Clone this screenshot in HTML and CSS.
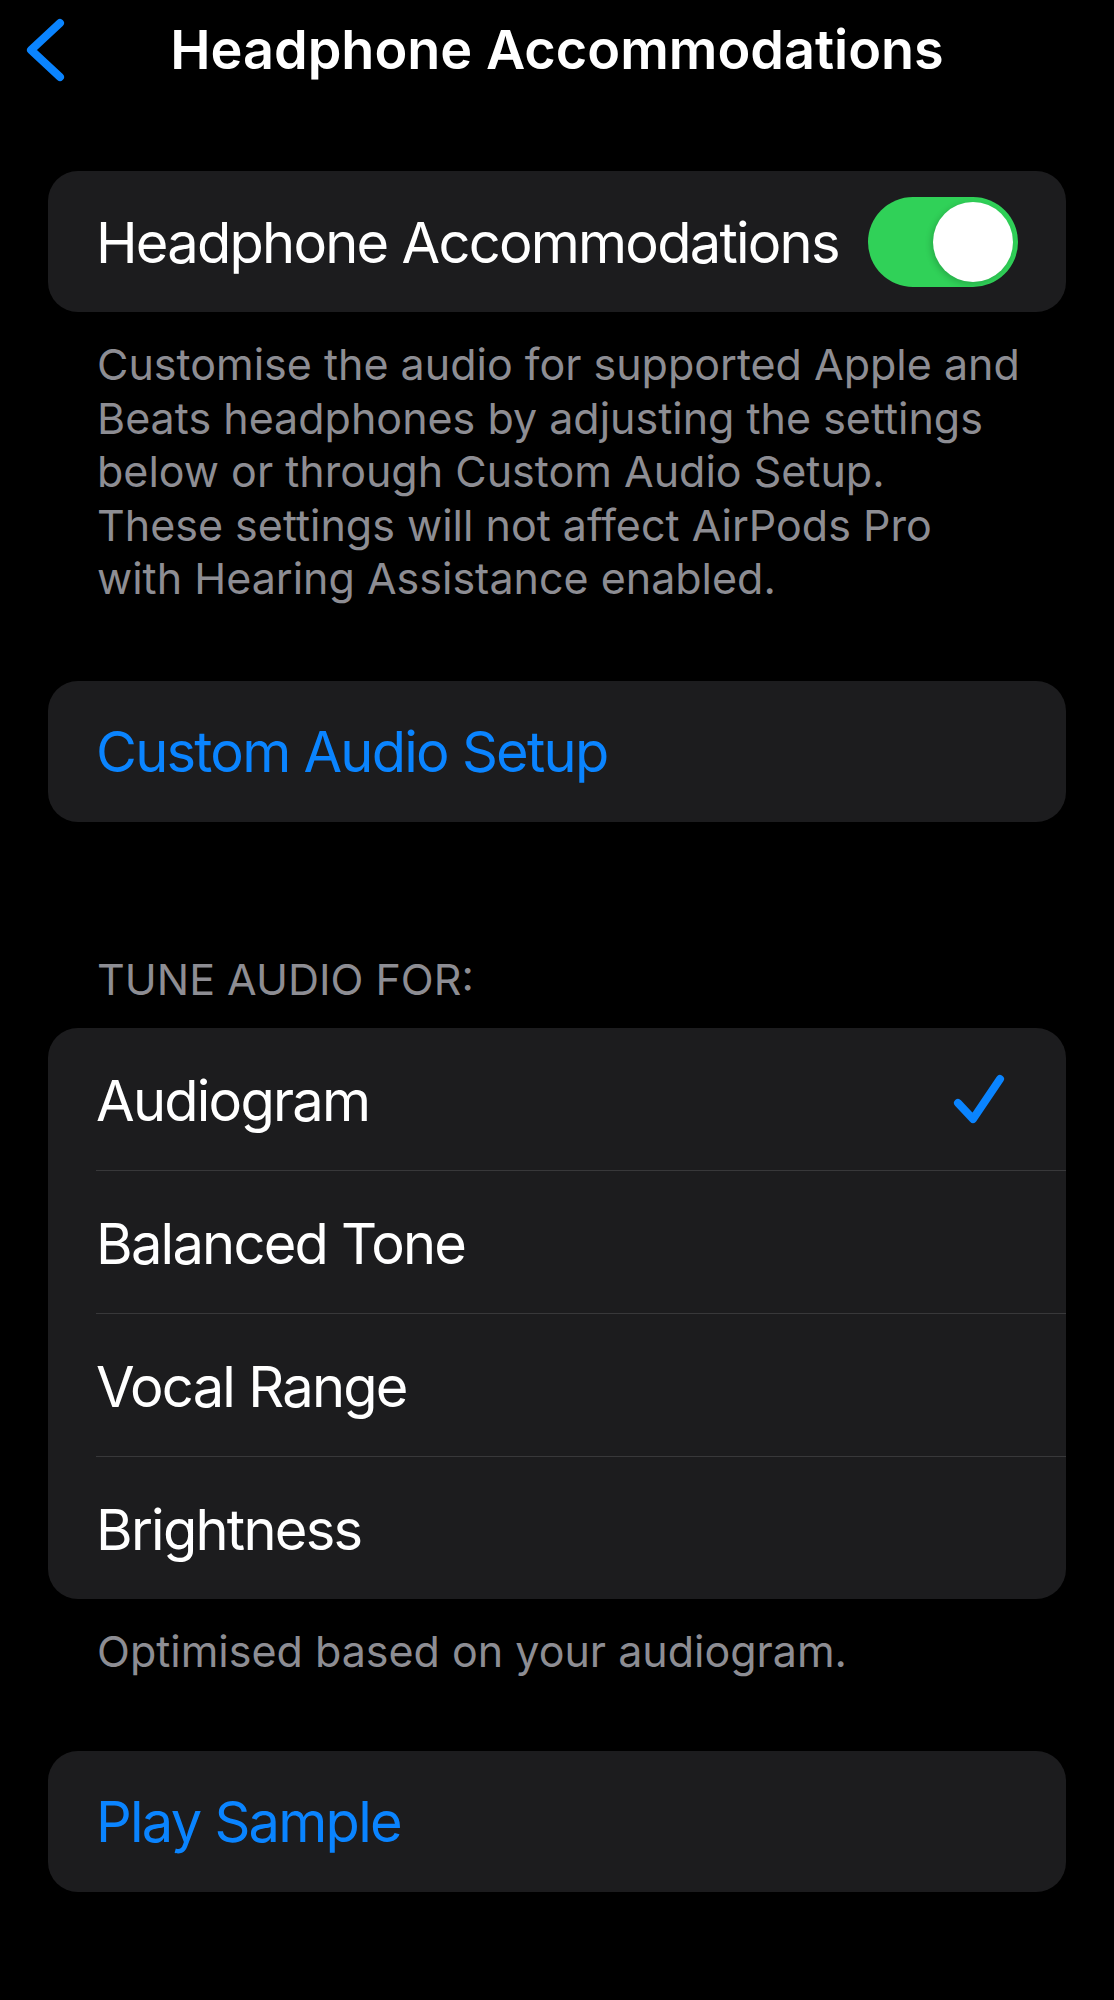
FILE: index.html
```html
<!DOCTYPE html>
<html lang="en">
<head>
<meta charset="utf-8">
<title>Headphone Accommodations</title>
<link rel="stylesheet" href="styles.css">
</head>
<body>
<div class="screen">
  <header class="nav">
    <svg class="back" width="40" height="64" viewBox="0 0 40 64" aria-hidden="true">
      <polyline points="34,5 5,32 34,59" fill="none" stroke="#0a84ff" stroke-width="8" stroke-linecap="round" stroke-linejoin="round"/>
    </svg>
    <h1 class="nav-title">Headphone Accommodations</h1>
  </header>

  <section class="card">
    <div class="row">
      <span class="label">Headphone Accommodations</span>
      <span class="switch"><span class="knob"></span></span>
    </div>
  </section>
  <p class="note note-top">Customise the audio for supported Apple and<br>Beats headphones by adjusting the settings<br>below or through Custom Audio Setup.<br>These settings will not affect AirPods Pro<br>with Hearing Assistance enabled.</p>

  <section class="card card-gap">
    <div class="row"><span class="label link">Custom Audio Setup</span></div>
  </section>

  <h2 class="section-header">TUNE AUDIO FOR:</h2>
  <section class="card list">
    <div class="row">
      <span class="label">Audiogram</span>
      <svg class="check" width="60" height="52" viewBox="0 0 60 52" aria-hidden="true">
        <polyline points="8,30 23,46 50,6" fill="none" stroke="#0a84ff" stroke-width="8" stroke-linecap="round" stroke-linejoin="round"/>
      </svg>
    </div>
    <div class="row"><span class="label">Balanced Tone</span></div>
    <div class="row"><span class="label">Vocal Range</span></div>
    <div class="row"><span class="label">Brightness</span></div>
  </section>
  <p class="note note-single">Optimised based on your audiogram.</p>

  <section class="card card-last">
    <div class="row"><span class="label link">Play Sample</span></div>
  </section>
</div>
</body>
</html>
```
FILE: styles.css
```css
html, body {
  margin: 0;
  padding: 0;
  background: #000;
}

.screen {
  width: 1114px;
  min-height: 2000px;
  background: #000;
  font-family: Inter, "Noto Sans", "Liberation Sans", sans-serif;
  color: #fff;
  box-sizing: border-box;
  padding: 0 48px;
}

.nav {
  position: relative;
  height: 104px;
  display: flex;
  align-items: center;
  justify-content: center;
}

.back {
  position: absolute;
  left: -22px;
  top: 18px;
}

.nav-title {
  margin: 0;
  font-size: 54px;
  font-weight: 600;
  letter-spacing: 0;
  line-height: 1;
  position: relative;
  top: -2px;
}

.card {
  background: #1c1c1e;
  border-radius: 30px;
  margin-top: 67px;
  overflow: hidden;
}

.card-gap {
  margin-top: 75px;
}

.card-last {
  margin-top: 72px;
}

.row {
  height: 141px;
  display: flex;
  align-items: center;
  justify-content: space-between;
  padding: 2px 48px 0 48px;
  box-sizing: border-box;
}

.label {
  font-size: 56px;
  letter-spacing: -1.75px;
  line-height: 1;
  color: #fff;
  white-space: nowrap;
}

.link {
  color: #0a84ff;
}

.switch {
  width: 150px;
  height: 90px;
  border-radius: 45px;
  background: #30d158;
  display: flex;
  align-items: center;
  justify-content: flex-end;
  padding: 0 5px;
  box-sizing: border-box;
  flex: none;
  margin-top: -2px;
}

.knob {
  width: 80px;
  height: 80px;
  border-radius: 50%;
  background: #fff;
  box-shadow: -2px 2px 6px rgba(0, 0, 0, 0.18);
}

.note {
  margin: 26px 0 0 0;
  padding: 0 20px 0 49px;
  font-size: 43px;
  line-height: 53.5px;
  letter-spacing: 0;
  color: #8d8d93;
}

.section-header {
  margin: 131px 0 0 0;
  padding: 0 48px 0 49px;
  font-size: 43px;
  font-weight: 400;
  line-height: 53.5px;
  letter-spacing: 0;
  color: #8d8d93;
}

.list {
  margin-top: 22px;
}

.list .row {
  height: 142px;
  padding-left: 0;
  margin-left: 48px;
  border-top: 1px solid #38383a;
  box-sizing: content-box;
  padding-top: 0;
  padding-bottom: 0;
}

.list .row .label {
  padding-top: 3px;
}

.list .row:first-child {
  border-top: none;
}

.check {
  margin-right: 8px;
  flex: none;
}
```
